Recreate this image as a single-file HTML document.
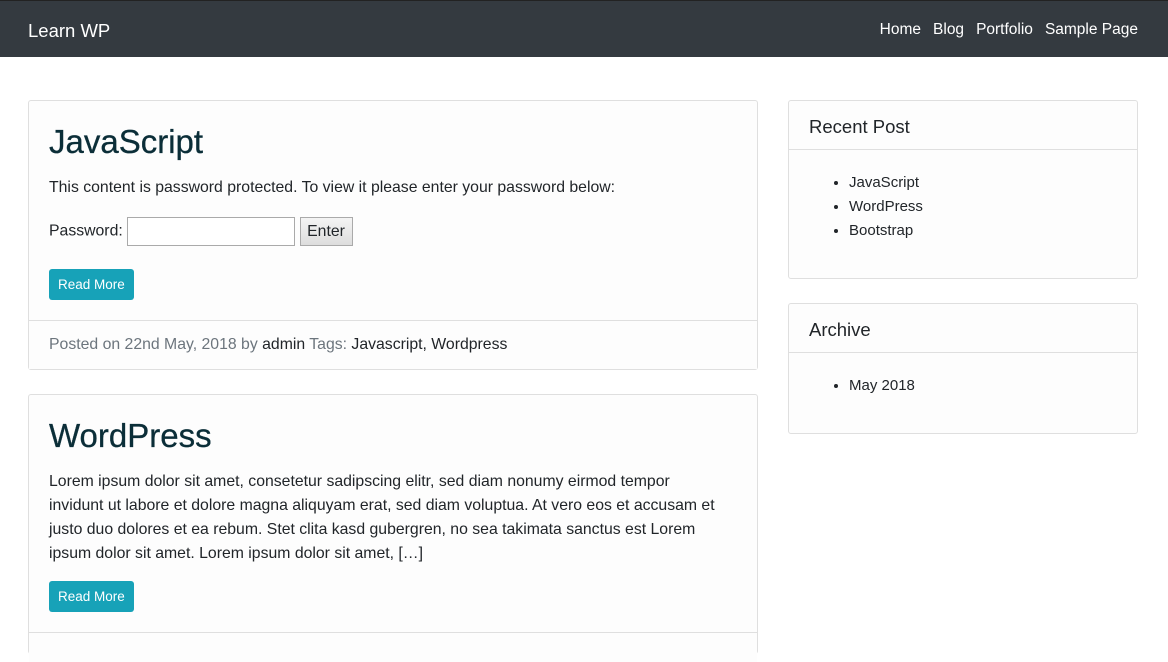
<!DOCTYPE html>
<html><head><style>
*{box-sizing:border-box;margin:0;padding:0}
html,body{width:1168px;height:636px;overflow:hidden}
body{background:#fff;font-family:"Liberation Sans",sans-serif;color:#212529;font-size:15.8px}
.nav{position:absolute;left:0;top:0;width:1168px;height:57px;background:#343a40;border-top:1px solid #222}
.brand{position:absolute;left:28px;top:19px;color:#fff;font-size:18.5px}
.links{position:absolute;right:30px;top:20px;color:#fff;font-size:15.5px}
.links span{margin-left:12px}
.card{position:absolute;border:1px solid #dfdfdf;border-radius:3px;background:#fdfdfd}
h2{position:absolute;left:20px;font-weight:normal;font-size:33px;color:#0b2e38;-webkit-text-stroke:0.3px #0b2e38}
p{position:absolute;left:20px;line-height:24px}
.btn{position:absolute;left:20px;background:#17a2b8;color:#fff;border-radius:3px;font-size:13.5px;padding:0 9px;height:31px;line-height:31px}
.foot{position:absolute;left:0;right:0;border-top:1px solid #dfdfdf;background:#fdfdfd}
.hd{position:absolute;left:0;right:0;top:0;height:49px;border-bottom:1px solid #dfdfdf;padding:15px 20px;font-size:18.5px}
ul{position:absolute;left:60px;line-height:24px;font-size:15px}
.g{color:#6c757d}
</style></head><body>
<div class="nav"><div class="brand">Learn WP</div><div class="links"><span>Home</span><span>Blog</span><span>Portfolio</span><span>Sample Page</span></div></div>

<div class="card" style="left:28px;top:100px;width:730px;height:270px">
<h2 style="top:22px">JavaScript</h2>
<p style="top:75px">This content is password protected. To view it please enter your password below:</p>
<p style="top:116px">Password: <span style="display:inline-block;width:168px;height:29px;border:1px solid #aaa;background:#fff;vertical-align:middle"></span> <span style="display:inline-block;width:53px;height:29px;border:1px solid #aaa;background:linear-gradient(#f4f4f4,#ddd);vertical-align:middle;text-align:center;line-height:27px">Enter</span></p>
<div class="btn" style="top:168px">Read More</div>
<div class="foot" style="top:219px;height:49px;padding:15px 20px 0"><span class="g">Posted on 22nd May, 2018 by </span>admin <span class="g">Tags: </span>Javascript, Wordpress</div>
</div>

<div class="card" style="left:28px;top:394px;width:730px;height:260px">
<h2 style="top:22px">WordPress</h2>
<p style="top:75px;white-space:nowrap">Lorem ipsum dolor sit amet, consetetur sadipscing elitr, sed diam nonumy eirmod tempor<br>invidunt ut labore et dolore magna aliquyam erat, sed diam voluptua. At vero eos et accusam et<br>justo duo dolores et ea rebum. Stet clita kasd gubergren, no sea takimata sanctus est Lorem<br>ipsum dolor sit amet. Lorem ipsum dolor sit amet, […]</p>
<div class="btn" style="top:186px">Read More</div>
<div class="foot" style="top:237px;height:30px"></div>
</div>

<div class="card" style="left:788px;top:100px;width:350px;height:179px">
<div class="hd">Recent Post</div>
<ul style="top:70px"><li>JavaScript</li><li>WordPress</li><li>Bootstrap</li></ul>
</div>
<div class="card" style="left:788px;top:303px;width:350px;height:131px">
<div class="hd">Archive</div>
<ul style="top:70px"><li>May 2018</li></ul>
</div>
</body></html>
